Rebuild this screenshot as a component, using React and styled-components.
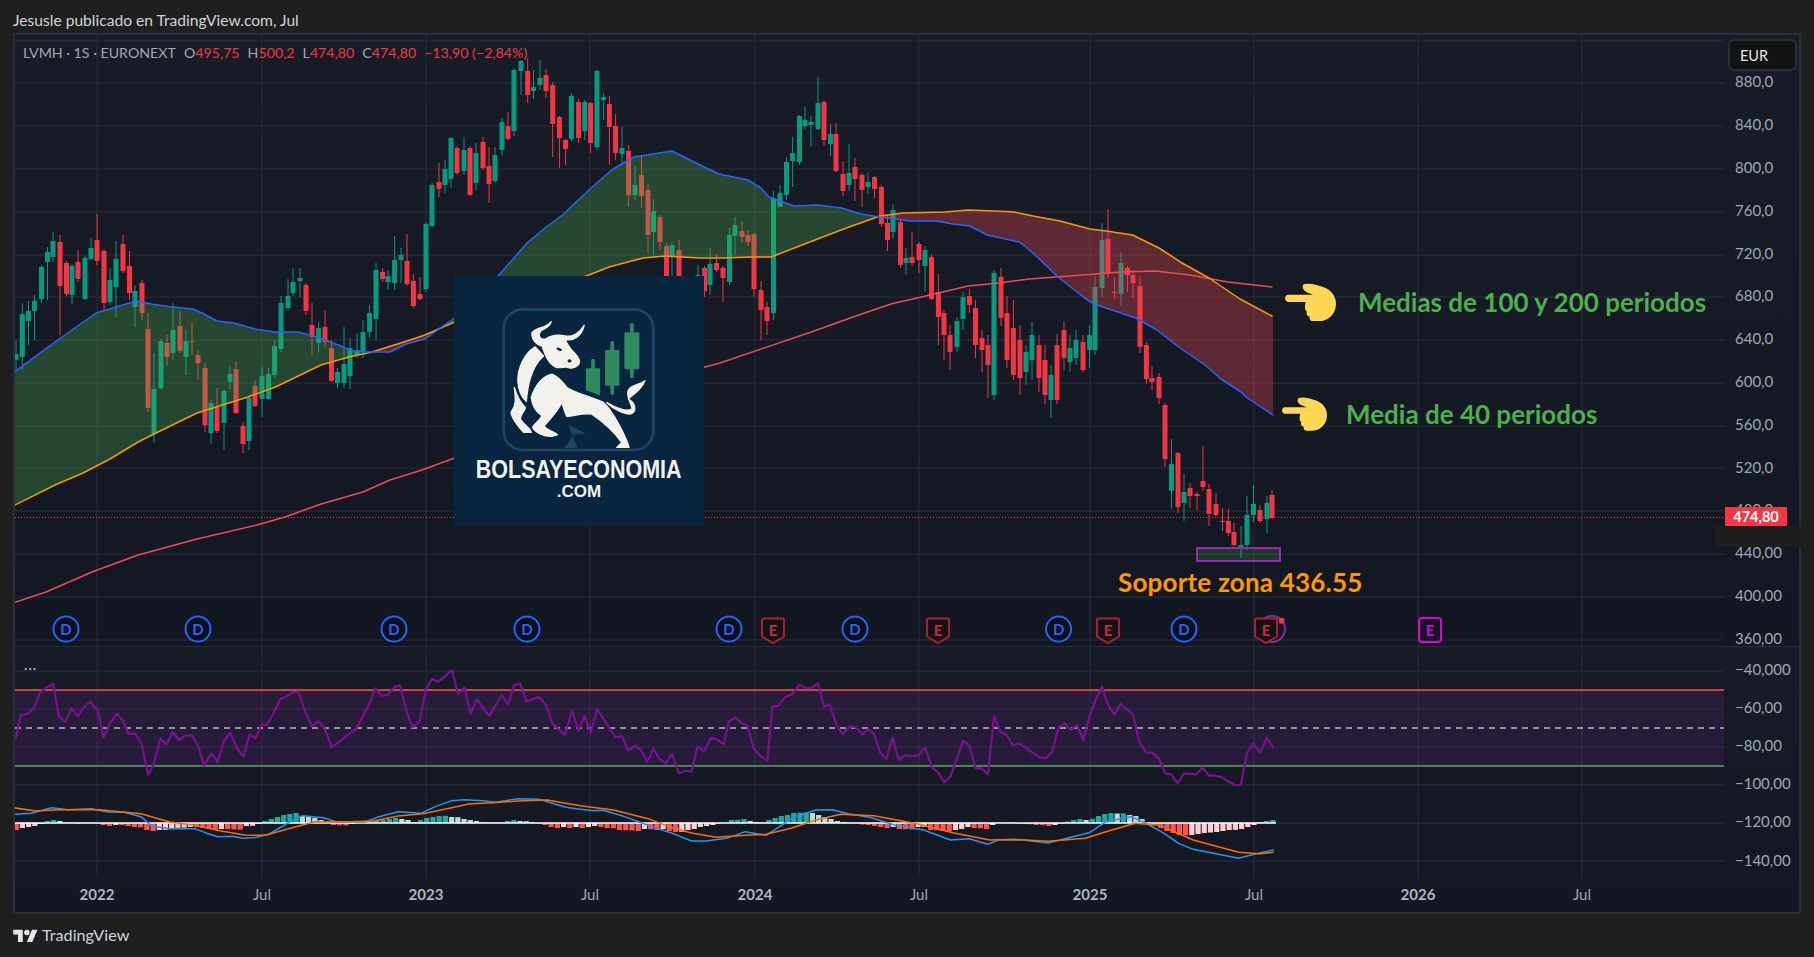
import styled, { createGlobalStyle } from 'styled-components';

const FONT = "'Lato', 'Noto Sans', 'Liberation Sans', sans-serif";
const UP = '#089981';
const DOWN = '#f23645';

const GlobalStyle = createGlobalStyle`
  html, body {
    margin: 0;
    background: #1f1f1f;
    font-family: ${FONT};
  }
`;

const Page = styled.div`
  width: 1814px;
  height: 957px;
  display: flex;
  flex-direction: column;
  overflow: hidden;
  background: #1f1f1f;
`;

const Header = styled.header`
  height: 33px;
  display: flex;
  align-items: center;
  padding: 7px 13px 0;
  box-sizing: border-box;
  color: #d1d4dc;
  font-size: 15.6px;
`;

const Frame = styled.section`
  margin: 0 13px;
  height: 881px;
  box-sizing: border-box;
  border: 2px solid #2a2e39;
  display: flex;
  flex-direction: column;
`;

const MainPane = styled.div`
  position: relative;
  height: 611px;
  display: flex;
  background: linear-gradient(#181c27, #131722);
  border-bottom: 1px solid #2a2e39;
`;

const LowerBlock = styled.div`
  flex: 1;
  display: flex;
  flex-direction: column;
  background: linear-gradient(#181c27, #131722);
`;

const OscPane = styled.div`
  position: relative;
  height: 231px;
  display: flex;
`;

const Plot = styled.svg`
  display: block;
  flex: 0 0 1709px;
  width: 1709px;
  polyline {
    stroke-linejoin: round;
    stroke-linecap: round;
  }
`;

const PriceAxis = styled.div`
  flex: 1;
  display: flex;
  flex-direction: column;
  padding-top: ${(p) => p.$top}px;
  padding-left: 11px;
`;

const PriceLabel = styled.div`
  height: ${(p) => p.$step}px;
  flex: none;
  display: flex;
  align-items: center;
  color: #a3a6af;
  font-size: 15px;
`;

const Legend = styled.div`
  position: absolute;
  left: 8px;
  top: 9px;
  display: flex;
  align-items: center;
  gap: 8px;
  font-size: 14.2px;
  color: #a3a6af;
`;

const LegendValue = styled.span`
  color: ${DOWN};
`;

const CurrencyButton = styled.div`
  position: absolute;
  right: 2px;
  top: 4px;
  width: 69px;
  height: 32px;
  box-sizing: border-box;
  padding-left: 10px;
  display: flex;
  align-items: center;
  background: #131313;
  border: 2px solid #2a2e39;
  border-radius: 6px;
  color: #e6e6e6;
  font-size: 14.5px;
`;

const PriceTag = styled.div`
  position: absolute;
  left: 1710px;
  top: 472px;
  width: 62px;
  height: 19px;
  display: flex;
  align-items: center;
  justify-content: center;
  background: ${DOWN};
  color: #fff;
  font-size: 14.5px;
  font-weight: 700;
`;

const AxisPatch = styled.div`
  position: absolute;
  left: 1700px;
  top: 491px;
  width: 86px;
  height: 21px;
  background: #1e1e1e;
`;

const Note = styled.div`
  position: absolute;
  left: ${(p) => p.$x}px;
  top: ${(p) => p.$y}px;
  display: flex;
  align-items: center;
  gap: ${(p) => p.$gap}px;
  color: ${(p) => p.$color};
  font-size: 26px;
  font-weight: 700;
  white-space: nowrap;
`;

const WideNote = styled(Note)`
  letter-spacing: 0.2px;
`;

const Hand = styled.svg`
  display: block;
  flex: none;
`;

const LogoCard = styled.div`
  position: absolute;
  left: 439px;
  top: 241px;
  width: 250px;
  height: 250px;
  box-sizing: border-box;
  padding-top: 30px;
  display: flex;
  flex-direction: column;
  align-items: center;
  background: #0a2540;
  color: #f1f0ea;
`;

const LogoMark = styled.svg`
  display: block;
  flex: none;
  margin-right: 2px;
`;

const LogoName = styled.div`
  margin-top: 1px;
  font-family: 'Liberation Sans', sans-serif;
  font-size: 25px;
  line-height: 28px;
  font-weight: 700;
  white-space: nowrap;
  transform: scaleX(0.86);
`;

const LogoSuffix = styled.div`
  font-family: 'Liberation Sans', sans-serif;
  font-size: 17px;
  line-height: 18px;
  font-weight: 700;
`;

const PaneDots = styled.div`
  position: absolute;
  left: 9px;
  top: 14px;
  color: #b2b5be;
  font-size: 13px;
  line-height: 14px;
  letter-spacing: 1px;
`;

const TimeAxis = styled.div`
  flex: 1;
  display: flex;
  align-items: center;
  padding-left: 82px;
  padding-bottom: 3px;
`;

const TimeTick = styled.div`
  flex: none;
  height: 20px;
`;

const TimeLabel = styled.span`
  display: inline-block;
  transform: translateX(-50%);
  color: ${(p) => (p.$year ? '#b2b5be' : '#a3a6af')};
  font-size: 15px;
  line-height: 20px;
  font-weight: ${(p) => (p.$year ? 700 : 400)};
`;

const Footer = styled.footer`
  flex: 1;
  display: flex;
  align-items: center;
  gap: 4px;
  padding: 0 13px 0;
  color: #d1d4dc;
  font-size: 16.2px;
  box-sizing: border-box;
  margin-top: -2px;
`;

const MarkerLetter = styled.text`
  font-family: ${FONT};
  font-size: 15px;
  font-weight: 700;
  text-anchor: middle;
  fill: ${(p) => p.$color};
`;

// x, dir, body top, body bottom, wick top, wick bottom (page pixels)
const CANDLES = [
  [16,'G',354,360,340,370],[22.3,'G',314,357,303,370],[28.5,'G',311,321,301,345],[34.5,'G',301,311,295,340],
  [41.5,'G',267,299,265,303],[47.5,'G',252,262,247,300],[53,'G',241,257,232,262],[60,'R',242,286,235,335],
  [66.5,'R',263,294,261,296],[72,'G',266,295,264,304],[78,'R',262,279,250,282],[85,'G',258,299,256,300],
  [91,'G',248,259,238,260],[97,'R',240,261,214,265],[104,'R',251,303,249,310],[110,'G',280,302,268,305],
  [116,'G',259,287,241,317],[123,'R',244,271,235,273],[129.5,'R',266,293,251,300],[135,'G',291,307,285,327],
  [142,'R',283,313,280,320],[148,'R',329,408,313,412],[154,'G',389,434,353,443],[161,'G',341,388,339,390],
  [167,'R',343,357,335,366],[173,'G',330,353,303,360],[180,'R',326,351,311,353],[186,'G',341,357,330,375],
  [192,'R',341,342,322,355],[198,'R',355,363,350,380],[205,'R',368,425,363,432],[211,'G',403,433,400,444],
  [217,'R',407,431,388,433],[224,'G',391,423,389,450],[230,'G',374,382,366,390],[236,'R',369,413,361,414],
  [243,'R',426,444,422,453],[249,'G',398,441,395,450],[255,'R',386,406,380,407],[262,'G',376,399,367,417],
  [268.6,'G',374,399,368,400],[274.6,'G',346,375,340,378],[281,'G',303,349,296,352],[288,'G',296,308,279,311],
  [293,'G',282,293,268,296],[300,'G',278,281,268,297],[306,'R',285,311,283,315],[312,'R',325,337,303,355],
  [318.6,'G',328,343,322,352],[325,'R',327,342,310,348],[331.5,'R',348,381,340,382],[337.5,'G',372,383,368,388],
  [344,'G',364,383,327,388],[350,'G',348,376,338,389],[357,'G',350,355,333,358],[363,'G',332,352,320,358],
  [369.6,'G',313,332,305,338],[376,'G',270,319,263,340],[382.6,'R',272,279,268,282],[388,'G',276,282,270,290],
  [394.6,'G',260,283,236,290],[401,'G',255,260,248,283],[407,'R',261,284,234,286],[413.4,'R',281,306,274,308],
  [420,'R',294,299,277,300],[426,'G',224,289,222,292],[432,'G',185,226,183,227],[439,'R',182,189,163,197],
  [445,'G',169,185,160,193],[451,'G',138,179,137,188],[457,'R',148,173,146,175],[464,'G',150,171,137,175],
  [470,'R',148,195,146,196],[476,'G',153,183,143,190],[483,'R',142,168,137,170],[489,'R',166,184,147,203],
  [495,'G',155,181,147,183],[502,'G',122,150,118,156],[508,'R',126,139,112,140],[514,'G',70,131,68,136],
  [521,'G',61,71,60,95],[527.7,'R',71,95,58,103],[533.5,'G',87,91,70,99],[540,'G',78,85,60,90],
  [546,'R',75,91,69,98],[552.7,'R',85,124,82,157],[559.4,'R',117,138,116,168],[565.6,'R',140,149,139,165],
  [571.4,'G',96,139,93,141],[578.6,'R',102,138,99,143],[584.8,'G',102,131,100,140],[590.6,'R',103,143,102,153],
  [597,'G',71,147,70,150],[603.6,'G',97,100,93,120],[609.4,'R',104,127,96,165],[615.6,'R',126,153,114,160],
  [622,'G',148,154,127,165],[628.6,'R',151,195,145,207],[635,'G',185,195,166,200],[641.5,'R',175,196,155,208],
  [648,'R',190,235,184,253],[653.6,'G',211,232,199,255],[660,'R',217,242,215,250],[666.5,'R',246,290,243,300],
  [672,'G',245,256,242,290],[679,'R',250,277,240,290],[698,'G',275,300,265,310],
  [704.6,'R',268,291,266,297],[710,'G',264,285,248,295],[716.5,'R',263,270,254,272],[723,'R',268,278,266,302],
  [729.5,'G',235,282,228,285],[735,'G',225,236,217,255],[742,'R',231,237,221,243],[748,'R',235,242,230,246],
  [754,'R',234,289,233,297],[761,'R',290,310,281,340],[767,'R',307,321,302,335],[773.5,'G',198,313,191,320],
  [780,'G',193,207,185,207],[786.5,'G',162,195,157,200],[792.6,'G',153,161,137,187],[799.5,'G',116,162,115,165],
  [805,'G',120,126,107,129],[811,'G',122,125,116,147],[818,'G',103,129,77,130],[824,'R',102,140,100,146],
  [830.5,'G',134,144,124,156],[836,'R',134,171,123,172],[843,'R',174,191,161,196],[849,'G',173,185,144,191],
  [855,'R',167,179,158,201],[862,'R',175,190,173,207],[868,'G',182,187,173,194],[874.5,'R',177,189,176,198],
  [881.4,'R',187,224,185,227],[887.5,'R',223,240,214,251],[893,'G',210,232,204,239],[900.5,'R',222,265,220,268],
  [906,'G',258,263,248,275],[912,'R',257,263,232,266],[919,'R',244,260,242,273],[925,'G',250,266,246,292],
  [931.5,'R',257,299,254,300],[938.4,'R',292,317,274,345],[944,'R',313,335,310,360],[950,'R',335,352,325,370],
  [957,'G',321,347,317,352],[963,'G',297,319,292,330],[969.4,'R',296,305,289,313],[975.5,'R',308,345,300,358],
  [982,'R',338,350,330,372],[988,'R',345,365,335,398],[994,'G',273,395,270,400],[1001,'R',277,318,268,326],
  [1007,'R',313,360,296,368],[1013.4,'R',328,375,300,380],[1020,'R',340,378,325,395],[1026,'G',352,372,345,385],
  [1032,'G',335,360,322,380],[1039,'R',345,378,335,392],[1045,'R',360,395,345,404],[1051,'G',375,400,365,418],
  [1057,'R',345,400,334,404],[1064,'R',330,358,321,370],[1070,'G',348,362,335,372],[1076,'G',340,358,330,365],
  [1083,'R',342,370,335,372],[1089.6,'G',335,350,325,368],[1095,'G',287,350,276,355],[1102,'G',240,288,223,297],
  [1108,'R',239,274,209,278],[1114.5,'R',292,293,277,299],[1121,'G',263,294,252,306],[1127.5,'R',268,275,266,292],
  [1133,'R',275,283,270,298],[1140,'R',286,347,276,353],[1146.4,'R',345,379,342,384],[1152,'R',378,382,366,390],
  [1159,'R',377,398,373,404],[1165,'R',405,459,403,467],[1171.5,'G',464,491,439,509],[1178,'R',453,507,452,513],
  [1184,'G',492,503,474,521],[1190,'R',488,496,483,508],[1197,'R',494,496,492,510],[1203,'R',481,487,446,491],
  [1209,'R',489,514,484,526],[1216,'R',504,515,493,516],[1222.5,'R',521,522,508,531],[1228.4,'R',521,533,509,536],
  [1234,'R',532,545,523,546],[1241,'G',545,549,526,558],[1247,'G',515,545,496,550],[1253.5,'G',504,515,485,522],
  [1260,'R',510,521,505,523],[1267,'G',503,519,496,533],[1272,'R',495,518,490,519],
];

const BLUE = [[13,373],[55,342],[96,313],[136,301],[151.5,304],[172,307],[193,309],[204,314],[217,321],[234,323],[255,329],[275,332],[298,332],[317,337],[333,343],[353.5,351],[367,352],[390,352],[406,344],[425,339],[454.5,318],[498,276],[527,243],[545,228],[562.5,215],[589,190],[611.6,170],[634,157],[672,151],[700,165],[719,174],[748,180],[761,188],[769,197],[794,206],[817,205],[841.6,208],[861,214],[880,217],[910.5,221],[937,221],[952.6,224],[970,226],[987,235],[1019.6,242],[1033,253],[1058,277],[1084.6,298],[1094,304],[1136,318],[1157,330],[1180,348],[1205,365],[1221,379],[1241,392],[1246,397],[1273,415]];
const ORANGE = [[13,506],[55,485],[83,473],[110,459],[138,442],[156,433],[197,413],[248,397],[275.5,387],[321,365],[349,357],[372,352],[404,342],[425,335],[454.5,322],[589,275],[609,267],[643,258],[665,256],[700,258],[723,258],[750,257],[771,257],[815,240],[849,227],[880,216],[903,213],[945,212],[968,210],[995,211],[1014,212],[1033,216],[1060,221],[1090,229],[1106,231],[1132.5,235],[1159,248],[1182,263],[1209,278],[1240,299],[1272,316]];
const SLOW = [[13,603],[46,592],[92,572],[138,555],[197,539],[257,525],[285,517],[321,504],[363,492],[390,480],[422,470],[454.5,458],[705,367],[720,363],[817,330],[853,317],[891,304],[930,295],[968,286],[998.5,283],[1029,279],[1083,275],[1121,272],[1155,271],[1190,275],[1228,282],[1272,287]];

const z6 = (pts) => pts.map(([x, y]) => [x / 2.412, 640 + y / 3]);
const z7 = (pts) => pts.map(([x, y]) => [650 + x / 2.412, 640 + y / 3]);

const RSI = [
  ...z6([[33,295],[38,295],[50,225],[65,222],[82,205],[97,157],[115,140],[128,131],[142,230],[158,245],[172,205],[188,228],[205,198],[218,185],[236,212],[250,293],[265,250],[282,220],[297,243],[310,282],[325,280],[342,312],[357,405],[370,375],[387,296],[402,313],[417,276],[432,300],[447,286],[463,286],[478,318],[492,376],[510,340],[525,366],[540,303],[555,278],[572,325],[587,350],[602,284],[617,295],[630,255],[645,253],[660,220],[676,177],[690,170],[705,157],[720,155],[736,215],[752,260],[767,244],[783,265],[800,322],[860,265],[890,195],[905,145],[920,167],[935,165],[950,142],[965,136],[980,212],[995,262],[1012,245],[1027,148],[1042,117],[1057,125],[1072,110],[1090,90],[1105,162],[1120,142],[1135,220],[1150,178],[1180,228],[1210,165],[1225,193],[1240,136],[1255,131],[1270,185],[1300,170],[1317,195],[1332,250],[1362,285],[1380,212],[1395,272],[1410,228],[1425,278],[1440,207],[1470,265],[1485,292],[1500,288],[1515,332],[1530,318],[1545,328],[1560,364],[1568,350]]),
  ...z7([[8,325],[22,355],[38,370],[53,342],[70,400],[85,392],[100,395],[115,318],[130,335],[147,293],[163,300],[178,312],[190,245],[205,232],[222,250],[235,258],[250,325],[268,350],[283,362],[295,200],[310,197],[327,170],[343,163],[360,135],[375,143],[388,145],[405,130],[420,200],[433,193],[450,255],[465,283],[482,258],[497,263],[512,283],[525,268],[540,280],[555,338],[570,357],[585,293],[600,360],[615,346],[632,349],[648,345],[663,322],[680,382],[695,397],[710,427],[725,409],[755,303],[770,315],[785,385],[800,385],[815,403],[830,228],[845,275],[860,285],[875,315],[890,310],[940,352],[955,355],[970,335],[985,262],[1000,250],[1015,270],[1030,255],[1045,300],[1060,228],[1075,180],[1090,140],[1105,195],[1120,225],[1135,192],[1165,223],[1180,305],[1197,338],[1212,338],[1228,357],[1243,400],[1257,403],[1273,430],[1288,400],[1318,403],[1333,382],[1348,407],[1363,407],[1380,412],[1410,435],[1425,435],[1440,340],[1455,310],[1472,338],[1488,293],[1503,322]]),
];

const MACD = [
  ...z6([[33,523],[75,520],[125,503],[165,509],[220,506],[260,516],[300,517],[340,530],[365,558],[410,566],[470,566],[495,578],[525,590],[560,589],[585,595],[620,592],[650,582],[700,545],[730,527],[780,533],[810,545],[880,546],[910,532],[960,515],[1015,520],[1050,500],[1090,482],[1120,479],[1165,482],[1195,487],[1250,476],[1300,478],[1365,502],[1395,507],[1430,512],[1455,511],[1500,527],[1568,558]]),
  ...z7([[50,578],[100,603],[135,603],[185,595],[230,575],[280,586],[350,530],[400,510],[440,509],[480,522],[530,532],[590,555],[660,570],[725,600],[770,596],[815,613],[840,600],[900,600],[960,609],[1030,587],[1060,578],[1100,545],[1160,530],[1200,552],[1240,580],[1275,610],[1310,628],[1420,655],[1450,645],[1503,630]]),
];

const SIGNAL = [
  ...z6([[33,503],[85,513],[140,509],[240,509],[340,521],[410,546],[470,556],[530,572],[590,585],[640,586],[700,565],[760,545],[830,546],[900,543],[960,528],[1020,521],[1090,503],[1130,492],[1190,488],[1250,483],[1320,480],[1400,497],[1480,510],[1568,538]]),
  ...z7([[50,562],[100,579],[160,592],[240,585],[280,583],[340,565],[400,540],[460,523],[540,527],[650,553],[730,578],[820,600],[880,598],[960,604],[1050,595],[1100,575],[1170,550],[1230,556],[1310,600],[1420,637],[1470,641],[1503,637]]),
];

const HIST = [
  -7,-5,-4,-3,-1,2,3,2,.5,.6,-1,.5,.4,-.5,-2,-3,-2,-2.2,-3,-4,-4.2,-7,-8,-7,-6.8,-5,-4.8,-4.6,-4,-4.2,-5,-6,-7,-6,-6.2,-6.4,-6.6,-3,-2.8,-.8,2,4,6,8,9,10,7,6,5,3,.5,-2,-2.2,-2.4,-1,.4,.6,2,2.5,3,4,5,4,3,.8,3,5,6,7,7.2,6,5.8,4,3,2,.6,.5,.6,.7,2,3,2,1.8,.6,-.4,-2,-4,-5,-4,-5,-4,-5,-4,-3,-4,-5,-5.2,-7,-7.2,-7.4,-8,
  -6,-6.2,-7,-6,-8,-9,-8.8,-7,-6,-4,-3,-2,-.5,.4,3,3.2,4,2,1,.4,3,5,7,8,10,10.2,10.4,10,8,6,4,2,1,.3,-.4,-1.5,-2,-3,-4,-5,-4,-6,-6.2,-6.4,-4,-3.8,-7,-7.2,-8,-8.2,-7,-6,-4,-5,-5.2,-6,-2,.4,.5,.4,-.5,-1,-1.2,-2,-2.2,-3,-2,-.3,1.5,3,4,3,4.2,7,9,10,9.5,9.6,8,7,4,.3,-1.5,-5,-8,-10,-12,-12.2,-12,-11,-10,-9.5,-9,-8,-7,-6.9,-6,-4,-2,1,2,3,
];

const sample = (pts, x) => {
  if (x <= pts[0][0]) return pts[0][1];
  for (let i = 1; i < pts.length; i += 1) {
    if (x <= pts[i][0]) {
      const [x0, y0] = pts[i - 1];
      const [x1, y1] = pts[i];
      return y0 + ((y1 - y0) * (x - x0)) / (x1 - x0);
    }
  }
  return pts[pts.length - 1][1];
};

const toPoints = (pts) => pts.map(([x, y]) => `${x},${y}`).join(' ');

// splits the band between the two averages into green and red stretches
const bandRuns = () => {
  const runs = [];
  let current = null;
  for (let x = 13; x <= 1273; x += 1.5) {
    const a = sample(BLUE, x);
    const b = sample(ORANGE, x);
    const green = a < b;
    if (!current || current.green !== green) {
      current = { green, top: [], bottom: [] };
      runs.push(current);
    }
    current.top.push([x, a]);
    current.bottom.unshift([x, b]);
  }
  return runs;
};

const histColor = (v, prev) => {
  if (v >= 0) return v >= prev ? '#26a69a' : '#b2dfdb';
  return v < prev ? '#ff5252' : '#ffcdd2';
};

const GRID_X = [97, 262, 426, 590, 755, 919, 1090, 1254, 1418, 1582];
const MAIN_GRID_Y = [41, 83, 126, 169, 212, 255, 297, 340, 383, 426, 468, 511, 554, 597, 640];
const OSC_GRID_Y = [671, 709, 747, 785, 823, 861];

const DIVIDENDS = [66, 198, 394, 527, 729, 855, 1058.6, 1184];
const EARNINGS = [773, 938, 1108, 1266];

const PRICES = ['880,0', '840,0', '800,0', '760,0', '720,0', '680,0', '640,0', '600,0', '560,0', '520,0', '480,0', '440,00', '400,00', '360,00'];
const OSC_PRICES = ['−40,000', '−60,00', '−80,00', '−100,00', '−120,00', '−140,00'];

const TICKS = [
  ['2022', 97, true],
  ['Jul', 262, false],
  ['2023', 426, true],
  ['Jul', 590, false],
  ['2024', 755, true],
  ['Jul', 919, false],
  ['2025', 1090, true],
  ['Jul', 1254, false],
  ['2026', 1418, true],
  ['Jul', 1582, false],
];

const PointingHand = ({ width }) => (
  <Hand width={width} height={(width * 115) / 153} viewBox="0 0 153 115">
    <path
      fill="#ffd757"
      d="M56 4C70-2 100 6 120 14C142 24 153 42 153 62C153 92 130 115 100 115L85 115C76 115 72 108 74 101C66 100 62 92 66 86C60 82 58 74 62 57L10 57C-3 57-3 35 10 35L85 35C75 30 62 28 56 20C52 14 52 8 56 4Z"
    />
  </Hand>
);

const LogoArtwork = () => (
  <LogoMark width={157} height={148} viewBox="150 105 470 445">
    <rect x="160" y="115" width="450" height="423" rx="58" fill="none" stroke="#1e4660" strokeWidth="8" />
    <path d="M355 463L408 488L372 490L342 533L382 533" fill="#1e4660" />
    <g fill="#2f8a62">
      <rect x="423" y="264" width="11" height="40" rx="4" />
      <path d="M407 296Q407 292 411 292L446 292Q450 292 450 296L450 373L407 358Z" />
      <rect x="481" y="210" width="11" height="162" rx="5" />
      <rect x="465" y="237" width="43" height="108" rx="4" />
      <rect x="540" y="156" width="11" height="166" rx="5" />
      <rect x="523" y="184" width="45" height="111" rx="4" />
    </g>
    <g fill="#f1f0ea" stroke="#f1f0ea" strokeWidth="4" strokeLinejoin="round">
      <path d="M303 152C285 175 262 165 245 185C243 205 258 222 275 225C285 250 293 280 320 290C335 292 345 285 355 290C370 295 388 285 388 270C385 255 372 245 362 235C352 220 345 208 345 205C370 212 395 195 402 163C390 185 365 200 345 195C320 190 300 195 285 205C268 205 262 195 272 180C282 172 298 170 303 152Z" />
      <path d="M255 228C225 245 200 290 203 335C205 360 215 380 228 392C232 350 240 290 280 255C270 245 262 235 255 228Z" />
      <path d="M192 350C195 380 200 400 182 425C185 445 210 475 220 485L243 485C240 470 222 465 210 445C210 430 225 420 225 410C210 395 198 370 192 350Z" />
      <path d="M305 310C280 315 255 340 243 380C245 400 252 420 275 435C265 455 250 460 247 470C255 485 280 498 305 497L322 492C310 482 285 478 282 465C300 445 320 425 335 395C340 410 345 430 350 437C375 435 400 425 425 430C455 450 490 480 515 515L500 530L537 530C530 505 490 420 460 395C420 375 380 370 350 350C335 330 320 315 305 310Z" />
      <path d="M470 395C490 415 520 430 540 430C560 425 560 400 535 385C540 375 570 365 585 330C565 345 545 340 535 358C525 380 550 405 545 415C530 425 495 410 470 395Z" />
    </g>
    <ellipse cx="327" cy="235" rx="9" ry="4" fill="#0a2540" transform="rotate(25 327 235)" />
    <ellipse cx="358" cy="270" rx="6" ry="5" fill="#0a2540" />
  </LogoMark>
);

const MainChart = () => (
  <Plot viewBox="15 35 1709 611" height="611">
    <g stroke="#2a2e39" strokeWidth="1">
      {MAIN_GRID_Y.map((y) => (
        <line key={y} x1="15" x2="1724" y1={y} y2={y} />
      ))}
      {GRID_X.map((x) => (
        <line key={x} x1={x} x2={x} y1="35" y2="646" />
      ))}
    </g>
    <line x1="15" x2="1724" y1="517.5" y2="517.5" stroke={DOWN} strokeDasharray="1 2" />
    {CANDLES.map(([x, dir, top, bottom, wickTop, wickBottom]) => {
      const color = dir === 'G' ? UP : DOWN;
      return (
        <g key={x}>
          <line x1={x} x2={x} y1={wickTop} y2={wickBottom} stroke={color} />
          <rect x={x - 2.5} y={top} width="5" height={bottom - top} fill={color} />
        </g>
      );
    })}
    {bandRuns().map((run) => (
      <polygon
        key={run.top[0][0]}
        points={toPoints([...run.top, ...run.bottom])}
        fill={run.green ? 'rgba(76,175,80,0.3)' : 'rgba(242,70,85,0.33)'}
      />
    ))}
    <polyline points={toPoints(SLOW)} fill="none" stroke="#ef4a5a" strokeWidth="1.5" />
    <polyline points={toPoints(ORANGE)} fill="none" stroke="#ff9800" strokeWidth="1.5" />
    <polyline points={toPoints(BLUE)} fill="none" stroke="#2962ff" strokeWidth="1.5" />
    <rect x="1197" y="548" width="83" height="13" fill="rgba(76,175,80,0.2)" stroke="#9c27b0" strokeWidth="2" />
    {DIVIDENDS.map((x) => (
      <g key={x}>
        <circle cx={x} cy="629" r="12.5" fill="#0f1116" stroke="#2962ff" strokeWidth="2" />
        <MarkerLetter x={x} y="634.5" $color="#2962ff">D</MarkerLetter>
      </g>
    ))}
    <circle cx="1272" cy="629" r="13" fill="none" stroke="#7b2f9e" strokeWidth="2" />
    <circle cx="1281.7" cy="620.7" r="3" fill="#f23645" />
    {EARNINGS.map((x) => (
      <g key={x}>
        <path
          d={`M${x - 9.5} 618.5H${x + 9.5}Q${x + 11} 618.5 ${x + 11} 620V636.5L${x} 643L${x - 11} 636.5V620Q${x - 11} 618.5 ${x - 9.5} 618.5Z`}
          fill="#15131a"
          stroke="#a5222e"
          strokeWidth="2"
        />
        <MarkerLetter x={x} y="635.5" $color="#c5303c">E</MarkerLetter>
      </g>
    ))}
    <rect x="1419" y="618" width="22" height="24" rx="3" fill="#131722" stroke="#e000e0" strokeWidth="2" />
    <MarkerLetter x="1430" y="635.5" $color="#e000e0">E</MarkerLetter>
  </Plot>
);

const OscChart = () => (
  <Plot viewBox="15 647 1709 231" height="231">
    <g stroke="#2a2e39" strokeWidth="1">
      {OSC_GRID_Y.map((y) => (
        <line key={y} x1="15" x2="1724" y1={y} y2={y} />
      ))}
      {GRID_X.map((x) => (
        <line key={x} x1={x} x2={x} y1="647" y2="878" />
      ))}
    </g>
    <rect x="15" y="690" width="1709" height="76" fill="rgba(126,40,170,0.16)" />
    <line x1="15" x2="1724" y1="690" y2="690" stroke="#ff5252" strokeWidth="1.5" />
    <line x1="15" x2="1724" y1="766" y2="766" stroke="#4caf50" strokeWidth="1.5" />
    <line x1="15" x2="1724" y1="728" y2="728" stroke="#fff" strokeWidth="1.2" strokeDasharray="6 5" />
    <polyline points={toPoints(RSI)} fill="none" stroke="#7a1190" strokeWidth="2.2" />
    {HIST.map((v, i) => {
      const x = 16.2 + (i * 1256.5) / (HIST.length - 1);
      return (
        <rect
          key={x}
          x={x - 2.6}
          y={v >= 0 ? 823 - v : 823}
          width="5.2"
          height={Math.abs(v)}
          fill={histColor(v, i ? HIST[i - 1] : 0)}
        />
      );
    })}
    <line x1="15" x2="1276" y1="823" y2="823" stroke="#fff" strokeWidth="1.5" />
    <polyline points={toPoints(MACD)} fill="none" stroke="#2196f3" strokeWidth="1.5" />
    <polyline points={toPoints(SIGNAL)} fill="none" stroke="#ff6d00" strokeWidth="1.5" />
  </Plot>
);

const App = () => (
  <Page>
    <GlobalStyle />
    <Header>Jesusle publicado en TradingView.com, Jul</Header>
    <Frame>
      <MainPane>
        <MainChart />
        <PriceAxis $top={25}>
          {PRICES.map((price) => (
            <PriceLabel key={price} $step={42.8}>{price}</PriceLabel>
          ))}
        </PriceAxis>
        <Legend>
          <span>LVMH · 1S · EURONEXT</span>
          <span>O<LegendValue>495,75</LegendValue></span>
          <span>H<LegendValue>500,2</LegendValue></span>
          <span>L<LegendValue>474,80</LegendValue></span>
          <span>C<LegendValue>474,80</LegendValue></span>
          <LegendValue>−13,90 (−2,84%)</LegendValue>
        </Legend>
        <CurrencyButton>EUR</CurrencyButton>
        <AxisPatch />
        <PriceTag>474,80</PriceTag>
        <LogoCard>
          <LogoArtwork />
          <LogoName>BOLSAYECONOMIA</LogoName>
          <LogoSuffix>.COM</LogoSuffix>
        </LogoCard>
        <Note $x={1270} $y={248} $gap={22} $color="#4caf50">
          <PointingHand width={51} />
          Medias de 100 y 200 periodos
        </Note>
        <Note $x={1267} $y={362} $gap={19} $color="#4caf50">
          <PointingHand width={45} />
          Media de 40 periodos
        </Note>
        <WideNote $x={1103} $y={531} $gap={0} $color="#ff9800">Soporte zona 436.55</WideNote>
      </MainPane>
      <LowerBlock>
        <OscPane>
          <OscChart />
          <PriceAxis $top={2.5}>
            {OSC_PRICES.map((price) => (
              <PriceLabel key={price} $step={38.2}>{price}</PriceLabel>
            ))}
          </PriceAxis>
          <PaneDots>···</PaneDots>
        </OscPane>
        <TimeAxis>
          {TICKS.map(([label, x, year], i) => {
            const next = TICKS[i + 1];
            return (
              <TimeTick key={x} style={{ width: next ? next[1] - x : 100 }}>
                <TimeLabel $year={year}>{label}</TimeLabel>
              </TimeTick>
            );
          })}
        </TimeAxis>
      </LowerBlock>
    </Frame>
    <Footer>
      <svg width="25" height="15" viewBox="0 0 36 22" aria-label="TradingView logo">
        <path fill="#e6e6e6" d="M14 22H7V11H0V4h14v18zM28 22h-8l7.5-18h8L28 22z" />
        <circle fill="#e6e6e6" cx="20" cy="8" r="4" />
      </svg>
      TradingView
    </Footer>
  </Page>
);

export default App;
